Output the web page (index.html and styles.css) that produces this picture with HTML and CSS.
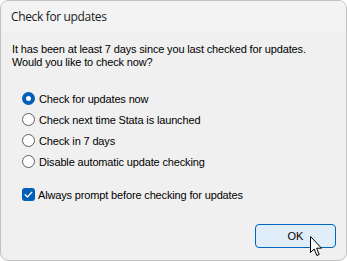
FILE: index.html
```html
<!DOCTYPE html>
<html>
<head>
<meta charset="utf-8">
<link rel="stylesheet" href="styles.css">
</head>
<body>
<div class="window">
  <div class="titlebar">Check for updates</div>
  <div class="content">
    <p class="msg">It has been at least 7 days since you last checked for updates.<br>Would you like to check now?</p>
    <div class="options">
      <div class="option"><span class="radio checked"></span><span>Check for updates now</span></div>
      <div class="option"><span class="radio"></span><span>Check next time Stata is launched</span></div>
      <div class="option"><span class="radio"></span><span>Check in 7 days</span></div>
      <div class="option"><span class="radio"></span><span>Disable automatic update checking</span></div>
    </div>
    <div class="option check-row"><span class="checkbox"><svg viewBox="0 0 13 13" width="13" height="13"><path d="M3.2 6.8 L5.4 9 L9.8 4.2" fill="none" stroke="#fff" stroke-width="1.3" stroke-linecap="round" stroke-linejoin="round"/></svg></span><span>Always prompt before checking for updates</span></div>
    <div class="footer">
      <button class="btn">OK</button>
    </div>
  </div>
  <svg class="cursor" width="14" height="22" viewBox="0 0 14 22"><path d="M0.5 0.5 L0.5 16.5 L4.2 13 L6.8 19.5 L9.2 18.5 L6.6 12.2 L11.5 12.2 Z" fill="#fff" stroke="#000" stroke-width="1" stroke-linejoin="round"/></svg>
</div>
</body>
</html>
```
FILE: styles.css
```css
html, body {
  margin: 0;
  padding: 0;
  background: #ffffff;
}
.window {
  position: relative;
  width: 347px;
  height: 261px;
  box-sizing: border-box;
  border: 1px solid #c2c2c2;
  border-radius: 8px;
  overflow: hidden;
  display: flex;
  flex-direction: column;
  background: #f0f0f0;
  font-family: "Liberation Sans", Arial, sans-serif;
  font-size: 11px;
  letter-spacing: -0.15px;
  color: #000;
}
.titlebar {
  height: 31px;
  flex: none;
  display: flex;
  align-items: center;
  padding-left: 10px;
  background: #f3f3f3;
  font-family: "Open Sans", "Liberation Sans", sans-serif;
  font-size: 12px;
  letter-spacing: -0.35px;
  color: #1a1a1a;
}
.content {
  flex: 1;
  display: flex;
  flex-direction: column;
  padding: 11px 10px 0 11px;
}
.msg {
  margin: 0;
  line-height: 13px;
}
.options {
  margin-top: 19px;
  display: flex;
  flex-direction: column;
}
.option {
  height: 21px;
  display: flex;
  align-items: center;
  padding-left: 10px;
}
.radio {
  width: 11px;
  height: 11px;
  border: 1px solid #606060;
  border-radius: 50%;
  background: #fdfdfd;
  margin-right: 4px;
  flex: none;
  box-sizing: content-box;
}
.radio.checked {
  width: 5px;
  height: 5px;
  border: 4px solid #005fb8;
  background: #ffffff;
}
.check-row {
  margin-top: 12px;
}
.checkbox {
  width: 13px;
  height: 13px;
  border-radius: 3px;
  background: #005fb8;
  margin-right: 3px;
  flex: none;
  display: flex;
}
.footer {
  margin-top: auto;
  display: flex;
  justify-content: flex-end;
  padding: 0 0 12px 0;
}
.btn {
  width: 81px;
  height: 24px;
  border: 1px solid #0067c0;
  border-radius: 4px;
  background: #e0eef9;
  font-family: "Liberation Sans", Arial, sans-serif;
  font-size: 11px;
  color: #000;
  padding: 0;
}
.cursor {
  position: absolute;
  left: 309px;
  top: 235px;
}
```
